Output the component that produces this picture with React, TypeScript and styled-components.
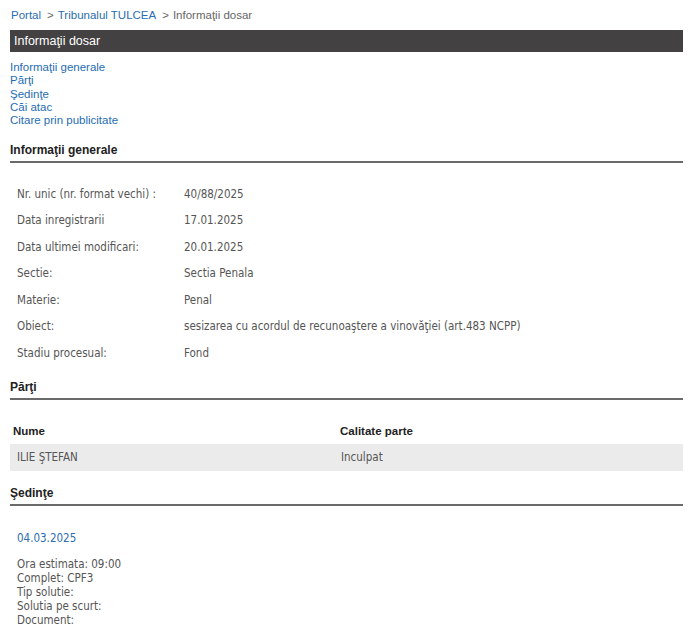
import React from "react";
import styled, { createGlobalStyle } from "styled-components";

const GlobalStyle = createGlobalStyle`
  body {
    margin: 0;
    background: #fff;
    font-family: "Liberation Sans", Arial, sans-serif;
  }
`;

const Page = styled.div`
  width: 673px;
  padding: 7px 0 0 10px;
`;

const Breadcrumb = styled.div`
  font-size: 11.5px;
  color: #666;
  padding-left: 1px;
  line-height: 16px;

  a {
    color: #2a6db0;
    text-decoration: none;
  }

  span {
    margin: 0 4px 0 6px;
  }
`;

const TitleBar = styled.div`
  margin-top: 7px;
  height: 22px;
  background: #444142;
  color: #fff;
  font-size: 12.5px;
  line-height: 22px;
  padding-left: 4px;
`;

const NavList = styled.div`
  margin-top: 9px;
  display: flex;
  flex-direction: column;

  a {
    color: #1f6db3;
    font-size: 11.5px;
    line-height: 13.3px;
    text-decoration: none;
  }
`;

const SectionTitle = styled.div<{ $top: number }>`
  margin-top: ${(p) => p.$top}px;
  font-size: 12px;
  font-weight: bold;
  color: #222;
  padding-bottom: 3px;
  border-bottom: 2px solid #6a6a6a;
  line-height: 15px;
`;

const dataFont = `
  font-family: "DejaVu Sans Condensed", "DejaVu Sans", Tahoma, sans-serif;
  font-size: 11.5px;
  color: #555;
`;

const InfoTable = styled.div`
  margin-top: 17px;
  display: grid;
  grid-template-columns: 167px 1fr;
  grid-auto-rows: 26.5px;
  padding-left: 7px;
  align-items: center;
  ${dataFont}
`;

const PartiTable = styled.div`
  margin-top: 23px;
  display: grid;
  grid-template-columns: 327px 1fr;
`;

const HeadCell = styled.div`
  font-size: 11.5px;
  font-weight: bold;
  color: #222;
  padding: 0 0 5px 3px;
  line-height: 16px;
`;

const BodyCell = styled.div<{ $pad: number }>`
  background: #ebebeb;
  height: 27px;
  line-height: 27px;
  padding-left: ${(p) => p.$pad}px;
  ${dataFont}
`;

const HearingDate = styled.div`
  margin: 24px 0 0 7px;
  line-height: 16px;
  ${dataFont}
  color: #2a6db0;
`;

const HearingDetails = styled.div`
  margin: 11px 0 0 7px;
  line-height: 14px;
  ${dataFont}
`;

const info: [string, string][] = [
  ["Nr. unic (nr. format vechi) :", "40/88/2025"],
  ["Data inregistrarii", "17.01.2025"],
  ["Data ultimei modificari:", "20.01.2025"],
  ["Sectie:", "Sectia Penala"],
  ["Materie:", "Penal"],
  ["Obiect:", "sesizarea cu acordul de recunoaştere a vinovăţiei (art.483 NCPP)"],
  ["Stadiu procesual:", "Fond"],
];

const hearing = ["Ora estimata: 09:00", "Complet: CPF3", "Tip solutie:", "Solutia pe scurt:", "Document:"];

export default function App() {
  return (
    <>
      <GlobalStyle />
      <Page>
        <Breadcrumb>
          <a href="#">Portal</a>
          <span>&gt;</span>
          <a href="#">Tribunalul TULCEA</a>
          <span>&gt;</span>
          Informaţii dosar
        </Breadcrumb>
        <TitleBar>Informaţii dosar</TitleBar>
        <NavList>
          <a href="#">Informaţii generale</a>
          <a href="#">Părţi</a>
          <a href="#">Şedinţe</a>
          <a href="#">Căi atac</a>
          <a href="#">Citare prin publicitate</a>
        </NavList>

        <SectionTitle $top={16}>Informaţii generale</SectionTitle>
        <InfoTable>
          {info.map(([label, value]) => (
            <React.Fragment key={label}>
              <div>{label}</div>
              <div>{value}</div>
            </React.Fragment>
          ))}
        </InfoTable>

        <SectionTitle $top={14}>Părţi</SectionTitle>
        <PartiTable>
          <HeadCell>Nume</HeadCell>
          <HeadCell>Calitate parte</HeadCell>
          <BodyCell $pad={7}>ILIE ŞTEFAN</BodyCell>
          <BodyCell $pad={4}>Inculpat</BodyCell>
        </PartiTable>

        <SectionTitle $top={15}>Şedinţe</SectionTitle>
        <HearingDate>04.03.2025</HearingDate>
        <HearingDetails>
          {hearing.map((line) => (
            <div key={line}>{line}</div>
          ))}
        </HearingDetails>
      </Page>
    </>
  );
}
